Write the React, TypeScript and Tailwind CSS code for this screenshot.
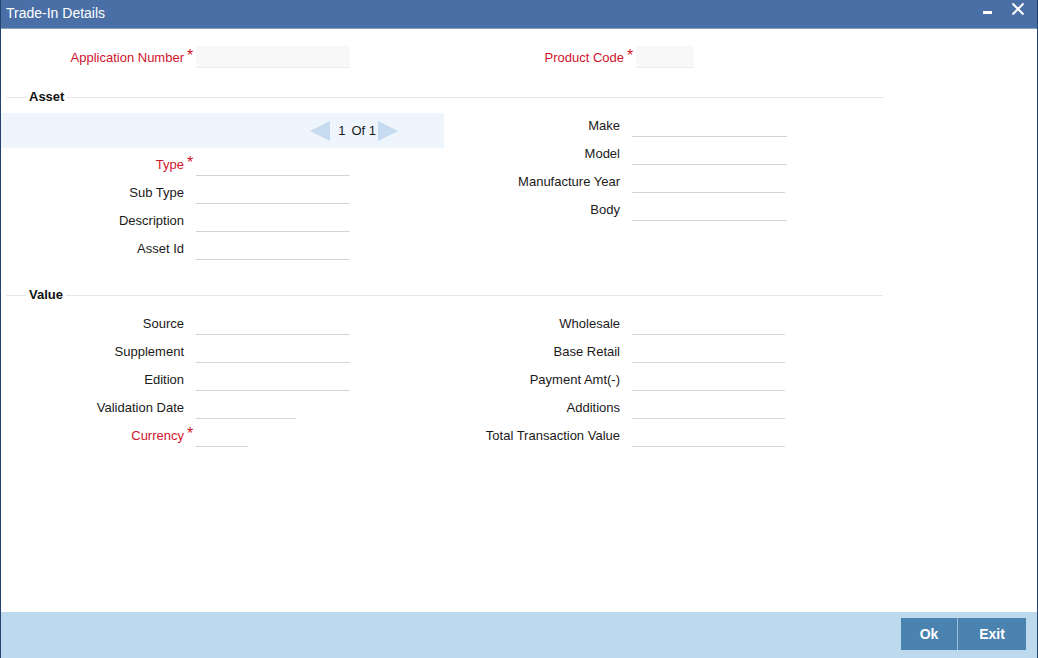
import React from "react";

interface FieldProps {
  label: string;
  required?: boolean;
  labelWidth: number;
  inputWidth: number;
}

function Field({ label, required, labelWidth, inputWidth }: FieldProps) {
  return (
    <div className="flex h-7 items-start">
      <div
        className={`pt-px text-right leading-7 ${required ? "text-[#d0142c]" : "text-[#1a1a1a]"}`}
        style={{ width: labelWidth }}
      >
        {label}
      </div>
      <div className="w-3 pl-[3px] pt-[5px] text-[16px] leading-4 text-[#d0142c]">{required ? "*" : ""}</div>
      <div className="h-[26px] border-b border-[#d4d4d4]" style={{ width: inputWidth }} />
    </div>
  );
}

function Legend({ title }: { title: string }) {
  return (
    <div className="flex h-4 items-center">
      <div className="ml-[5px] w-[20px] border-t border-[#e6e6e6]" />
      <div className="px-[3px] text-[13px] font-bold text-[#111]">{title}</div>
      <div className="w-[817px] border-t border-[#e6e6e6]" />
    </div>
  );
}

export default function App() {
  return (
    <div
      className="flex h-[658px] w-[1038px] flex-col overflow-hidden border-x border-[#23426f] bg-white text-[13px]"
      style={{ fontFamily: '"Liberation Sans", Arial, sans-serif' }}
    >
      <div className="flex h-[29px] shrink-0 items-start justify-between border-b border-[#8aa0b4] bg-[#4a6fa6] pl-[5px] pr-[12px]">
        <span className="mt-[5px] text-[14px] leading-4 text-white">Trade-In Details</span>
        <div className="flex items-start gap-[19px]">
          <svg width="10" height="16" viewBox="0 0 10 16">
            <rect x="1" y="11" width="9" height="3" fill="#fff" />
          </svg>
          <svg width="14" height="16" viewBox="0 0 14 16">
            <path d="M1.5 3.5 L12.5 14.5 M12.5 3.5 L1.5 14.5" stroke="#fff" strokeWidth="2" />
          </svg>
        </div>
      </div>

      <div className="flex-1">
        <div className="mt-[14px] flex">
          <div className="flex h-7 w-[443px] items-start">
            <div className="w-[183px] pt-px text-right leading-7 text-[#d0142c]">Application Number</div>
            <div className="w-3 pl-[3px] pt-[5px] text-[16px] leading-4 text-[#d0142c]">*</div>
            <div className="mt-[3px] h-[22px] w-[154px] border-b border-[#ececec] bg-[#f8f8f8]" />
          </div>
          <div className="flex h-7 items-start">
            <div className="w-[180px] pt-px text-right leading-7 text-[#d0142c]">Product Code</div>
            <div className="w-3 pl-[3px] pt-[5px] text-[16px] leading-4 text-[#d0142c]">*</div>
            <div className="mt-[3px] h-[22px] w-[58px] border-b border-[#ececec] bg-[#f8f8f8]" />
          </div>
        </div>

        <div className="mt-[18px]">
          <Legend title="Asset" />
        </div>

        <div className="flex">
          <div className="w-[443px] pt-[8px]">
            <div className="mb-[2px] flex h-[35px] items-center justify-end bg-[#eef5fc] pr-[46px]">
              <svg width="20" height="20" viewBox="0 0 20 20">
                <polygon points="20,0 20,20 0,10" fill="#c6daf0" />
              </svg>
              <span className="ml-[8px] mr-[6px] pt-px text-[#1a1a1a]">1</span>
              <span className="pt-px text-[#1a1a1a]">Of 1</span>
              <svg width="20" height="20" viewBox="0 0 20 20" className="ml-[2px]">
                <polygon points="0,0 0,20 20,10" fill="#c6daf0" />
              </svg>
            </div>
            <Field label="Type" required labelWidth={183} inputWidth={154} />
            <Field label="Sub Type" labelWidth={183} inputWidth={154} />
            <Field label="Description" labelWidth={183} inputWidth={154} />
            <Field label="Asset Id" labelWidth={183} inputWidth={154} />
          </div>
          <div className="pt-[6px]">
            <Field label="Make" labelWidth={176} inputWidth={155} />
            <Field label="Model" labelWidth={176} inputWidth={155} />
            <Field label="Manufacture Year" labelWidth={176} inputWidth={153} />
            <Field label="Body" labelWidth={176} inputWidth={155} />
          </div>
        </div>

        <div className="mt-[25px]">
          <Legend title="Value" />
        </div>

        <div className="flex pt-[6px]">
          <div className="w-[443px]">
            <Field label="Source" labelWidth={183} inputWidth={154} />
            <Field label="Supplement" labelWidth={183} inputWidth={154} />
            <Field label="Edition" labelWidth={183} inputWidth={154} />
            <Field label="Validation Date" labelWidth={183} inputWidth={100} />
            <Field label="Currency" required labelWidth={183} inputWidth={52} />
          </div>
          <div>
            <Field label="Wholesale" labelWidth={176} inputWidth={153} />
            <Field label="Base Retail" labelWidth={176} inputWidth={153} />
            <Field label="Payment Amt(-)" labelWidth={176} inputWidth={153} />
            <Field label="Additions" labelWidth={176} inputWidth={153} />
            <Field label="Total Transaction Value" labelWidth={176} inputWidth={153} />
          </div>
        </div>
      </div>

      <div className="flex h-[46px] shrink-0 items-start justify-end bg-[#bdd9ee] pr-[11px] pt-[6px]">
        <button className="h-[32px] w-[57px] border-r border-[#9cc0dc] bg-[#4a82b0] text-[14px] font-bold text-white">
          Ok
        </button>
        <button className="h-[32px] w-[68px] bg-[#4a82b0] text-[14px] font-bold text-white">Exit</button>
      </div>
    </div>
  );
}
